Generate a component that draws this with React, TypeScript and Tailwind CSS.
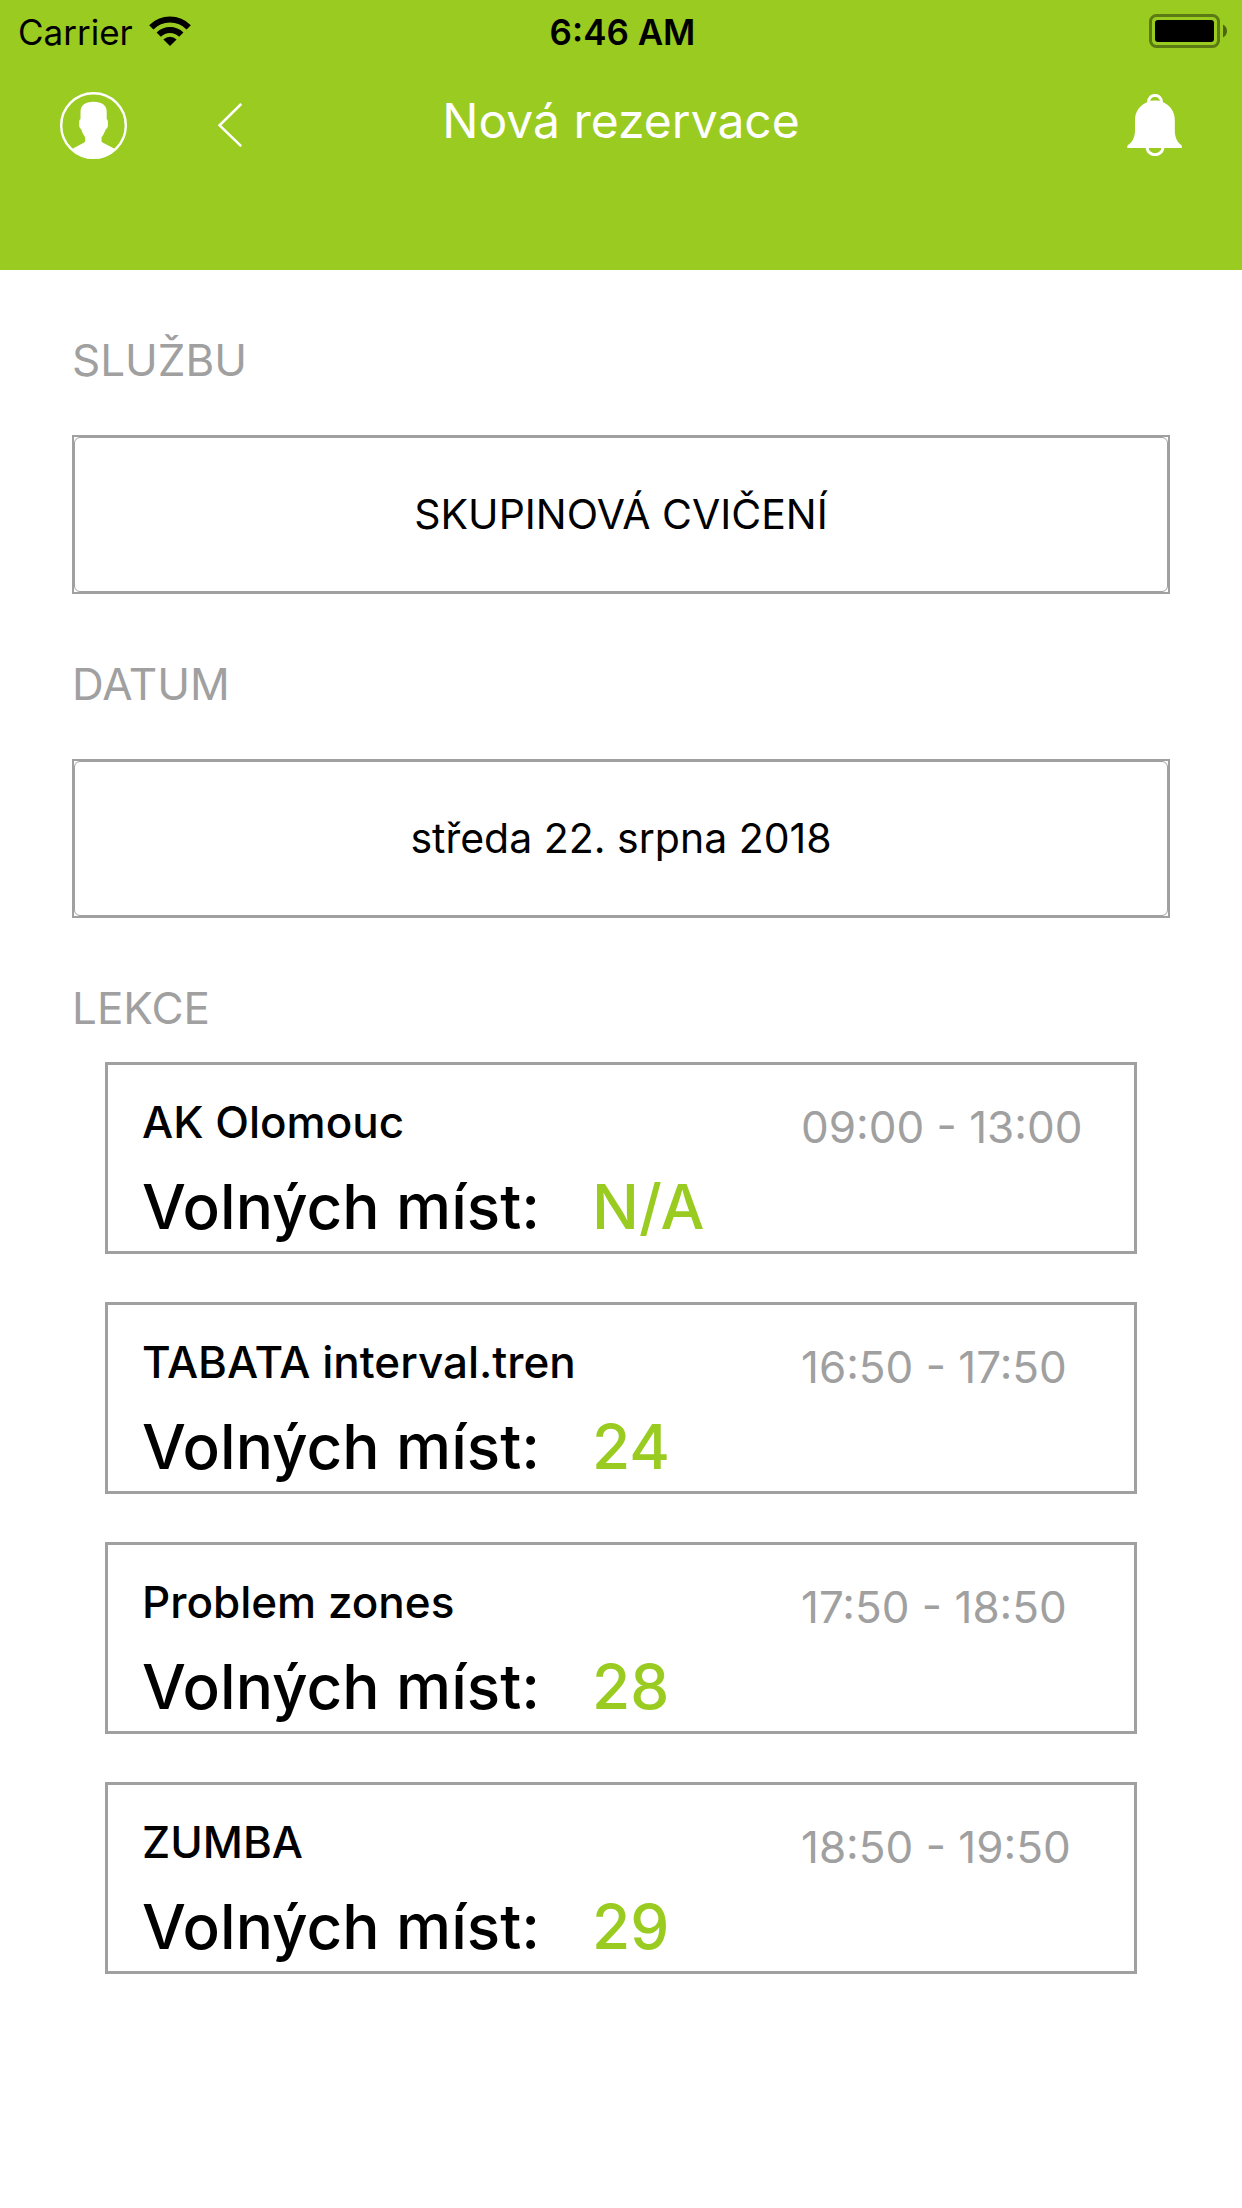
import React from "react";

type Lesson = { name: string; time: string; free: string };

const lessons: Lesson[] = [
  { name: "AK Olomouc", time: "09:00 - 13:00", free: "N/A" },
  { name: "TABATA interval.tren", time: "16:50 - 17:50", free: "24" },
  { name: "Problem zones", time: "17:50 - 18:50", free: "28" },
  { name: "ZUMBA", time: "18:50 - 19:50", free: "29" },
];

function WifiIcon() {
  return (
    <svg viewBox="0 0 42 30" className="h-[30px] w-[42px]" aria-hidden="true">
      <path d="M2.3 11.3A26.45 26.45 0 0 1 39.7 11.3" fill="none" stroke="#000" strokeWidth="6" />
      <path d="M9.7 18.7A16 16 0 0 1 32.3 18.7" fill="none" stroke="#000" strokeWidth="6" />
      <path d="M21 30L14.4 23.4A9.4 9.4 0 0 1 27.6 23.4Z" />
    </svg>
  );
}

function BatteryIcon() {
  return (
    <svg viewBox="0 0 78 34" className="h-[34px] w-[78px]" aria-hidden="true">
      <rect x="1.5" y="1.5" width="68" height="31" rx="6" fill="none" stroke="#000" strokeOpacity="0.4" strokeWidth="3" />
      <rect x="6" y="6" width="59" height="22" rx="3" />
      <path d="M74 10.5C79.3 13 79.3 21 74 23.5Z" fillOpacity="0.5" />
    </svg>
  );
}

function ProfileIcon() {
  return (
    <svg viewBox="0 0 67 67" className="size-[67px]" aria-hidden="true">
      <circle cx="33.5" cy="33.5" r="32.3" fill="none" stroke="#fff" strokeWidth="2.4" />
      <path
        fill="#fff"
        d="M12 57L24.2 50.6Q25.2 50 25.2 48.5V45.5Q22.2 41.5 21.2 37.3Q19.4 36.4 19.2 34V29.5Q19.2 27.8 20.5 27V19.5Q20.8 10 33.5 9.8Q46.4 10 46.7 19.5V27Q47.9 27.8 47.9 29.5V34Q47.7 36.4 45.7 37.5Q44.3 41.5 41.5 45.5V48.5Q41.5 50 42.5 50.6L55 57Q46 67 33.5 67Q21 67 12 57Z"
      />
    </svg>
  );
}

function BackIcon() {
  return (
    <svg viewBox="0 0 24 44" className="h-[44px] w-[24px]" aria-hidden="true">
      <path d="M23.2 1L1.6 22.3L23.2 43.2" fill="none" stroke="#fff" strokeWidth="2.5" />
    </svg>
  );
}

function BellIcon() {
  return (
    <svg viewBox="0 0 55 62" className="h-[62px] w-[55px]" aria-hidden="true">
      <path d="M21.5 8.5C21.5 -1 34.5 -1 34.5 8.5" fill="none" stroke="#fff" strokeWidth="3" />
      <path d="M20.1 53C20.1 63.2 35.9 63.2 35.9 53" fill="none" stroke="#fff" strokeWidth="3" />
      <path
        fill="#fff"
        d="M21.5 7.5Q24 6.3 28 6.3T34.5 7.5C43.5 11 47.8 18 47.8 26V36C47.8 43.5 50.5 48.5 54.4 51Q55 52 54.8 54H.6Q-.4 52.5 1 51C5 48.5 8 43.5 8 36V26C8 18 12.5 11 21.5 7.5Z"
      />
      <path d="M24.3 6.5Q25 3.9 28 3.9T31.7 6.5Q28 5.9 24.3 6.5Z" fill="#9acb21" />
    </svg>
  );
}

function PickerSection({ label, value, id }: { label: string; value: string; id: string }) {
  return (
    <section className="pt-[58px]">
      <h2 id={id} className="mb-[43px] text-[44px] leading-[64px] text-[#a0a0a0]">
        {label}
      </h2>
      <button
        type="button"
        aria-describedby={id}
        className="block w-full border-2 border-[#a0a0a0] text-[41px] leading-[57px] text-black"
      >
        <span className="block rounded-[6px] border border-[#a0a0a0] px-6 py-[48px]">{value}</span>
      </button>
    </section>
  );
}

function LessonCard({ lesson }: { lesson: Lesson }) {
  return (
    <button
      type="button"
      className="block w-full border-3 border-[#a0a0a0] pt-[27px] pb-2 pl-[34px] text-left text-black"
    >
      <span className="flex items-start justify-between text-[44px] leading-[60px]">
        <span className="font-medium">{lesson.name}</span>
        <span className="w-[333px] pt-[5px] text-[#a0a0a0]">{lesson.time}</span>
      </span>
      <span className="mt-[14px] flex gap-[52px] text-[62px] leading-[72px] font-medium">
        <span>Volných míst:</span>
        <span className="text-[#9acb21]">{lesson.free}</span>
      </span>
    </button>
  );
}

export default function App() {
  return (
    <div className="min-h-screen bg-white font-['Inter',sans-serif]">
      <header className="bg-[#9acb21] pb-[80px]">
        <div className="grid h-[60px] grid-cols-[1fr_auto_1fr] items-center pr-[15px] pl-[18px] text-[35px] leading-[60px] text-black">
          <div className="flex items-center gap-[16px]">
            <span className="pt-[2px]">Carrier</span>
            <WifiIcon />
          </div>
          <span className="pt-[2px] font-semibold">6:46 AM</span>
          <div className="flex justify-end">
            <BatteryIcon />
          </div>
        </div>
        <nav className="grid h-[130px] grid-cols-[1fr_auto_1fr] items-center px-[60px]">
          <div className="flex items-center gap-[91px]">
            <button type="button" aria-label="Profil">
              <ProfileIcon />
            </button>
            <button type="button" aria-label="Zpět">
              <BackIcon />
            </button>
          </div>
          <h1 className="pb-2 text-[48px] leading-[60px] text-white">Nová rezervace</h1>
          <button type="button" aria-label="Oznámení" className="justify-self-end">
            <BellIcon />
          </button>
        </nav>
      </header>
      <main className="px-[72px]">
        <PickerSection id="service" label="SLUŽBU" value="SKUPINOVÁ CVIČENÍ" />
        <PickerSection id="date" label="DATUM" value="středa 22. srpna 2018" />
        <section className="pt-[58px]">
          <h2 className="mb-[22px] text-[44px] leading-[64px] text-[#a0a0a0]">LEKCE</h2>
          <ul className="flex flex-col gap-[48px] px-[33px]">
            {lessons.map((lesson) => (
              <li key={lesson.name}>
                <LessonCard lesson={lesson} />
              </li>
            ))}
          </ul>
        </section>
      </main>
    </div>
  );
}
